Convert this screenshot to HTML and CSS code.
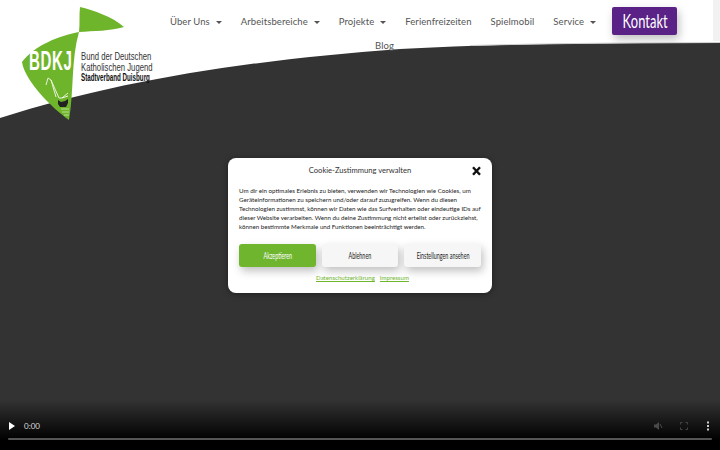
FILE: index.html
```html
<!DOCTYPE html>
<html lang="de">
  <head>
    <meta charset="UTF-8" />
    <title>BDKJ Stadtverband Duisburg</title>
    <link rel="stylesheet" href="styles.css">
  </head>
  <body>
    <div class="page">
      <!-- white curve at the top -->
      <svg class="curve" width="720" height="120" viewBox="0 0 720 120">
        <path d="M0 0H720V43C620 43 500 43 400 49C250 60 120 80 0 118Z" fill="#fff" />
        <path d="M713 0H720V41H713Z" fill="#f2f2f2" />
        <path d="M470 45.500C560 43 640 43 720 42.500" fill="none" stroke="#d0d0d0" />
      </svg>

      <!-- Header -->
      <header class="header">
        <div class="logo">
          <svg class="logo-mark" width="112" height="116" viewBox="0 0 112 116">
            <path d="M59 0C72 3 92 10 103 20C90 24 72 24 58 25C59 16 58 8 59 0Z" fill="#6fb52c" />
            <path d="M58 25C38 29 14 38 1 55C4 74 30 100 48 113C53 85 50 52 58 25Z" fill="#6fb52c" />
            <path d="M27 71L30 73L38 91H41L47 86M30 73L35 90M41 91L47 89M27 71L25 78" fill="none" stroke="#e8f4d8" stroke-width="1" />
            <path d="M37 93L40 95L44 94L47 92V96L45 100H39L37 97Z" fill="#222" />
            <path d="M40 102H48M41 105H48M43 108H48" stroke="#cfe6ad" stroke-width="0.800" />
          </svg>
          <span class="logo-bdkj">BDKJ</span>
          <div class="logo-text">
            <span>Bund der Deutschen</span>
            <span>Katholischen Jugend</span>
            <strong>Stadtverband Duisburg</strong>
          </div>
        </div>
        <nav class="nav">
          <div class="nav-row">
            <a href="#">Über Uns<i class="caret"></i></a>
            <a href="#">Arbeitsbereiche<i class="caret"></i></a>
            <a href="#">Projekte<i class="caret"></i></a>
            <a href="#">Ferienfreizeiten</a>
            <a href="#">Spielmobil</a>
            <a href="#">Service<i class="caret"></i></a>
            <a href="#" class="kontakt"><span>Kontakt</span></a>
          </div>
          <div class="nav-row-blog"><a href="#">Blog</a></div>
        </nav>
      </header>

      <!-- Cookie Modal -->
      <div class="modal">
        <div class="modal-head">
          <h2>Cookie-Zustimmung verwalten</h2>
          <svg class="close" width="9" height="10" viewBox="0 0 9 10">
            <path d="M1 1.200L8 8.800M8 1.200L1 8.800" stroke="#111" stroke-width="2.400" />
          </svg>
        </div>
        <p>Um dir ein optimales Erlebnis zu bieten, verwenden wir Technologien wie Cookies, um<br>Geräteinformationen zu speichern und/oder darauf zuzugreifen. Wenn du diesen<br>Technologien zustimmst, können wir Daten wie das Surfverhalten oder eindeutige IDs auf<br>dieser Website verarbeiten. Wenn du deine Zustimmung nicht erteilst oder zurückziehst,<br>können bestimmte Merkmale und Funktionen beeinträchtigt werden.</p>
        <div class="modal-btns">
          <button class="btn btn-green"><span>Akzeptieren</span></button>
          <button class="btn"><span>Ablehnen</span></button>
          <button class="btn"><span>Einstellungen ansehen</span></button>
        </div>
        <div class="modal-links">
          <a href="#">Datenschutzerklärung</a>
          <a href="#">Impressum</a>
        </div>
      </div>

      <!-- Video controls -->
      <div class="controls">
        <div class="controls-row">
          <svg width="8" height="10" viewBox="0 0 8 10"><path d="M1 1L7 5L1 9Z" fill="#fff" /></svg>
          <span class="time">0:00</span>
          <svg class="ctl-mute" width="10" height="10" viewBox="0 0 10 10"><path d="M1 3.500H3L6 1V9L3 6.500H1Z" fill="#4a4a4a" /><path d="M7 3L9 7" stroke="#4a4a4a" /></svg>
          <svg class="ctl-full" width="8" height="8" viewBox="0 0 8 8"><path d="M0.500 2.500V0.500H2.500M5.500 0.500H7.500V2.500M7.500 5.500V7.500H5.500M2.500 7.500H0.500V5.500" fill="none" stroke="#444" /></svg>
          <svg class="ctl-more" width="4" height="10" viewBox="0 0 4 10"><path d="M1 0.500H3V2.500H1ZM1 4H3V6H1ZM1 7.500H3V9.500H1Z" fill="#ccc" /></svg>
        </div>
        <div class="track"></div>
      </div>
    </div>
  </body>
</html>
```

FILE: styles.css
```css
body {
  margin: 0;
  font-family: Lato, sans-serif;
  color: #555;
}

.page {
  position: relative;
  width: 720px;
  height: 450px;
  overflow: hidden;
  background-color: #333;
}

.curve {
  position: absolute;
  top: 0;
  left: 0;
}

/* Header */
.header {
  position: relative;
  display: flex;
  height: 120px;
}

.logo {
  position: relative;
  width: 170px;
  flex: none;
  padding: 7px 0 0 21px;
  box-sizing: border-box;
}

.logo-mark {
  display: block;
}

.logo-bdkj {
  position: absolute;
  top: 46px;
  left: 29px;
  color: #fff;
  font-family: "Liberation Sans", sans-serif;
  font-weight: bold;
  font-size: 27px;
  letter-spacing: 1px;
  transform: scaleX(0.56);
  transform-origin: left center;
}

.logo-text {
  position: absolute;
  top: 51px;
  left: 81px;
  display: flex;
  flex-direction: column;
  font-family: "Liberation Sans", sans-serif;
  font-size: 11.500px;
  line-height: 10.500px;
  color: #333;
  white-space: nowrap;
  transform: scaleX(0.67);
  transform-origin: left center;
}

.logo-text strong {
  color: #111;
  font-size: 10px;
  line-height: 11.500px;
  transform: scaleX(0.93);
  transform-origin: left center;
}

.nav {
  display: flex;
  flex-direction: column;
  flex: 1;
  padding-top: 7px;
  font-size: 9.500px;
  letter-spacing: 0.080px;
  white-space: nowrap;
}

.nav a {
  color: #555;
  text-decoration: none;
}

.nav-row {
  display: flex;
  align-items: center;
  gap: 19px;
  height: 28px;
}

.nav-row a {
  margin-top: 1px;
}

.nav-row-blog {
  margin-top: 5px;
  padding-left: 205px;
}

.caret {
  display: inline-block;
  margin-left: 6px;
  border-top: 3px solid #555;
  border-left: 3.500px solid transparent;
  border-right: 3.500px solid transparent;
  vertical-align: middle;
}

.nav-row .kontakt {
  margin-top: 0;
  margin-left: -3px;
  width: 65px;
  height: 28px;
  line-height: 28px;
  text-align: center;
  background-color: #5a2186;
  border-radius: 2px;
  box-shadow: 2px 4px 8px rgba(0, 0, 0, 0.25);
}

.kontakt span {
  display: inline-block;
  color: #fff;
  font-size: 19px;
  transform: scaleX(0.68);
}

/* Modal */
.modal {
  position: absolute;
  top: 158px;
  left: 228px;
  width: 264px;
  height: 135px;
  box-sizing: border-box;
  padding: 0 11px;
  background: #fff;
  border-radius: 8px;
  box-shadow: 0 1px 6px rgba(0, 0, 0, 0.4);
}

.modal-head {
  position: relative;
  display: flex;
  justify-content: center;
  align-items: center;
  height: 24px;
}

.modal-head h2 {
  margin: 0;
  font-size: 7.600px;
  font-weight: normal;
  color: #333;
}

.close {
  position: absolute;
  right: 0;
  top: 8px;
}

.modal p {
  margin: 4px 0 0;
  font-size: 6.200px;
  line-height: 9.100px;
  color: #222;
  white-space: nowrap;
}

.modal-btns {
  display: flex;
  gap: 6px;
  margin-top: 13px;
}

.btn {
  width: 77px;
  height: 23px;
  padding: 0;
  border: none;
  border-radius: 3px;
  background-color: #f6f6f6;
  color: #222;
  font-family: Lato, sans-serif;
  font-size: 9px;
  white-space: nowrap;
  box-shadow: 2px 4px 8px rgba(0, 0, 0, 0.25);
}

.btn span {
  display: inline-block;
  margin: 0 -10px;
  transform: scaleX(0.6);
}

.btn-green {
  background-color: #70b52e;
  color: #fff;
}

.modal-links {
  display: flex;
  justify-content: center;
  gap: 5px;
  margin-top: 7px;
  padding-left: 5px;
  font-size: 6.100px;
}

.modal-links a {
  color: #70b52e;
}

/* Video controls */
.controls {
  position: absolute;
  left: 0;
  right: 0;
  bottom: 0;
  height: 50px;
  box-sizing: border-box;
  padding: 20px 8px 0;
  background: linear-gradient(rgba(0, 0, 0, 0), #000 80%);
}

.controls-row {
  display: flex;
  align-items: center;
  height: 11px;
}

.time {
  margin-left: 8px;
  font-size: 8px;
  color: #ddd;
}

.ctl-mute {
  margin-left: auto;
  margin-right: 17px;
}

.ctl-full {
  margin-right: 18px;
}

.ctl-more {
  margin-right: 2px;
}

.track {
  height: 2px;
  margin-top: 7px;
  background-color: #555;
  border-radius: 1px;
}
```
